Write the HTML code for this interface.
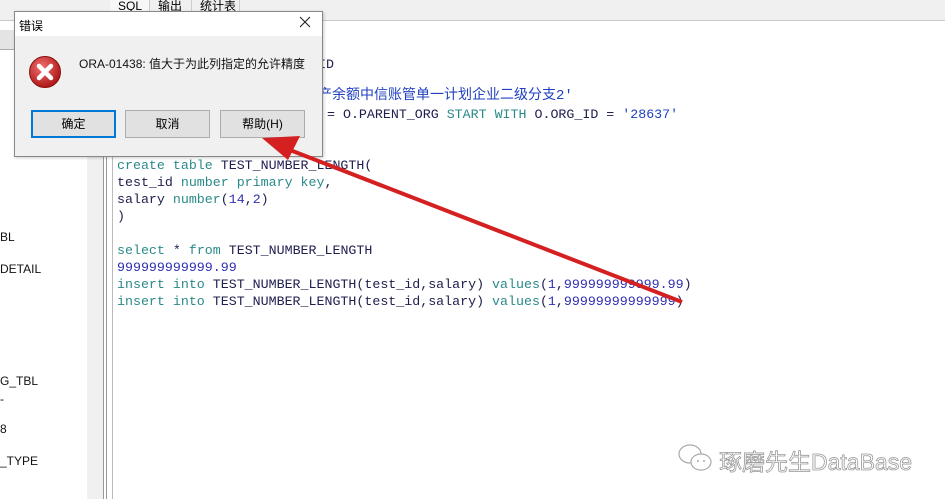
<!DOCTYPE html>
<html><head><meta charset="utf-8"><style>
*{margin:0;padding:0;box-sizing:border-box}
body{width:945px;height:499px;overflow:hidden;background:#fff;position:relative;font-family:"Liberation Sans","Noto Sans CJK SC",sans-serif}
.abs{position:absolute}
.code{position:absolute;left:117px;font-family:"Liberation Mono","Noto Sans CJK SC",monospace;font-size:13.3px;line-height:17px;white-space:pre;color:#202050}
.k{color:#2a8a8a}.n{color:#3030b0}.s{color:#2040c0}
.lbl{position:absolute;left:0;font-size:12px;color:#111}
.btn{position:absolute;top:110px;height:28px;width:85px;background:#e1e1e1;border:1px solid #adadad;font-size:12px;text-align:center;line-height:26px;color:#000}
</style></head><body>
<div class="abs" style="left:0;top:0;width:945px;height:21px;background:#f0f0f0;border-bottom:1px solid #c8c8c8"></div>
<div class="abs" style="left:110px;top:0;width:40px;height:21px;background:#f7f7f7;border-right:1px solid #ccc;font-size:12px;padding-left:8px;line-height:12px">SQL</div>
<div class="abs" style="left:150px;top:0;width:42px;height:21px;background:#f0f0f0;border-right:1px solid #ccc;font-size:12px;padding-left:8px;line-height:12px">输出</div>
<div class="abs" style="left:192px;top:0;width:48px;height:21px;background:#f0f0f0;border-right:1px solid #ccc;font-size:12px;padding-left:8px;line-height:12px">统计表</div>
<div class="abs" style="left:0;top:30px;width:88px;height:20px;background:#e4e4e4;border-bottom:1px solid #aaa"></div>
<div class="abs" style="left:87px;top:22px;width:16px;height:477px;background:#f0f0f0"></div>
<div class="abs" style="left:103px;top:22px;width:1px;height:477px;background:#999"></div>
<div class="abs" style="left:106px;top:22px;width:1px;height:477px;background:#999"></div>
<div class="abs" style="left:112px;top:22px;width:1px;height:477px;background:#bbb"></div>
<div class="lbl" style="top:230px">BL</div>
<div class="lbl" style="top:262px">DETAIL</div>
<div class="lbl" style="top:374px">G_TBL</div>
<div class="lbl" style="top:392px">-</div>
<div class="lbl" style="top:422px">8</div>
<div class="lbl" style="top:454px">_TYPE</div>
<div class="code" style="top:56px;left:318px">ID</div>
<div class="code s" style="top:88px;left:318px;font-size:14px">产余额中信账管单一计划企业二级分支2'</div>
<div class="code" style="top:106px;left:327px">= O.PARENT_ORG <span class="k">START WITH</span> O.ORG_ID = <span class="s">'28637'</span></div>
<div class="code" style="top:157px"><span class="k">create table</span> TEST_NUMBER_LENGTH(
test_id <span class="k">number primary key</span>,
salary <span class="k">number</span>(<span class="n">14</span>,<span class="n">2</span>)
)

<span class="k">select</span> * <span class="k">from</span> TEST_NUMBER_LENGTH
<span class="n">999999999999.99</span>
<span class="k">insert into</span> TEST_NUMBER_LENGTH(test_id,salary) <span class="k">values</span>(<span class="n">1</span>,<span class="n">999999999999.99</span>)
<span class="k">insert into</span> TEST_NUMBER_LENGTH(test_id,salary) <span class="k">values</span>(<span class="n">1</span>,<span class="n">99999999999999</span>)</div>
<div class="abs" style="left:14px;top:11px;width:309px;height:146px;background:#f0f0f0;border:1px solid #888;box-shadow:1px 1px 3px rgba(0,0,0,.2)">
 <div style="height:24px;background:#fff;font-size:12px;padding:5px 0 0 4px">错误</div>
</div>
<svg class="abs" style="left:299px;top:16px" width="12" height="12" viewBox="0 0 12 12"><path d="M1 1L11 11M11 1L1 11" stroke="#222" stroke-width="1.1"/></svg>
<svg class="abs" style="left:28px;top:55px" width="34" height="34" viewBox="0 0 34 34">
<defs><radialGradient id="g" cx="40%" cy="35%" r="65%"><stop offset="0" stop-color="#f07070"/><stop offset="1" stop-color="#b01818"/></radialGradient></defs>
<circle cx="17" cy="17" r="15.5" fill="url(#g)" stroke="#8a1010"/>
<path d="M11 11 L23 23 M23 11 L11 23" stroke="#fff" stroke-width="4.5" stroke-linecap="round"/>
</svg>
<div class="abs" style="left:79px;top:55px;font-size:12px;color:#111">ORA-01438: 值大于为此列指定的允许精度</div>
<div class="btn" style="left:31px;border:2px solid #0078d7;line-height:24px">确定</div>
<div class="btn" style="left:125px">取消</div>
<div class="btn" style="left:220px">帮助(H)</div>
<svg class="abs" style="left:0;top:0" width="945" height="499">
<line x1="682" y1="302" x2="290" y2="150" stroke="#d42020" stroke-width="4"/>
<polygon points="262,138 300,136 288,160" fill="#d42020"/>
</svg>
<svg class="abs" style="left:676px;top:443px" width="40" height="32" viewBox="0 0 40 32">
<ellipse cx="14" cy="11" rx="11" ry="9" fill="none" stroke="#aaa" stroke-width="1.2"/>
<ellipse cx="25" cy="19" rx="10" ry="8" fill="#fff" stroke="#aaa" stroke-width="1.2"/>
<circle cx="22" cy="18" r="1" fill="#aaa"/><circle cx="28" cy="18" r="1" fill="#aaa"/>
</svg>
<div class="abs" style="left:719px;top:443px;font-size:23px;color:#fff;-webkit-text-stroke:0.8px #999">琢磨先生DataBase</div>
</body></html>
